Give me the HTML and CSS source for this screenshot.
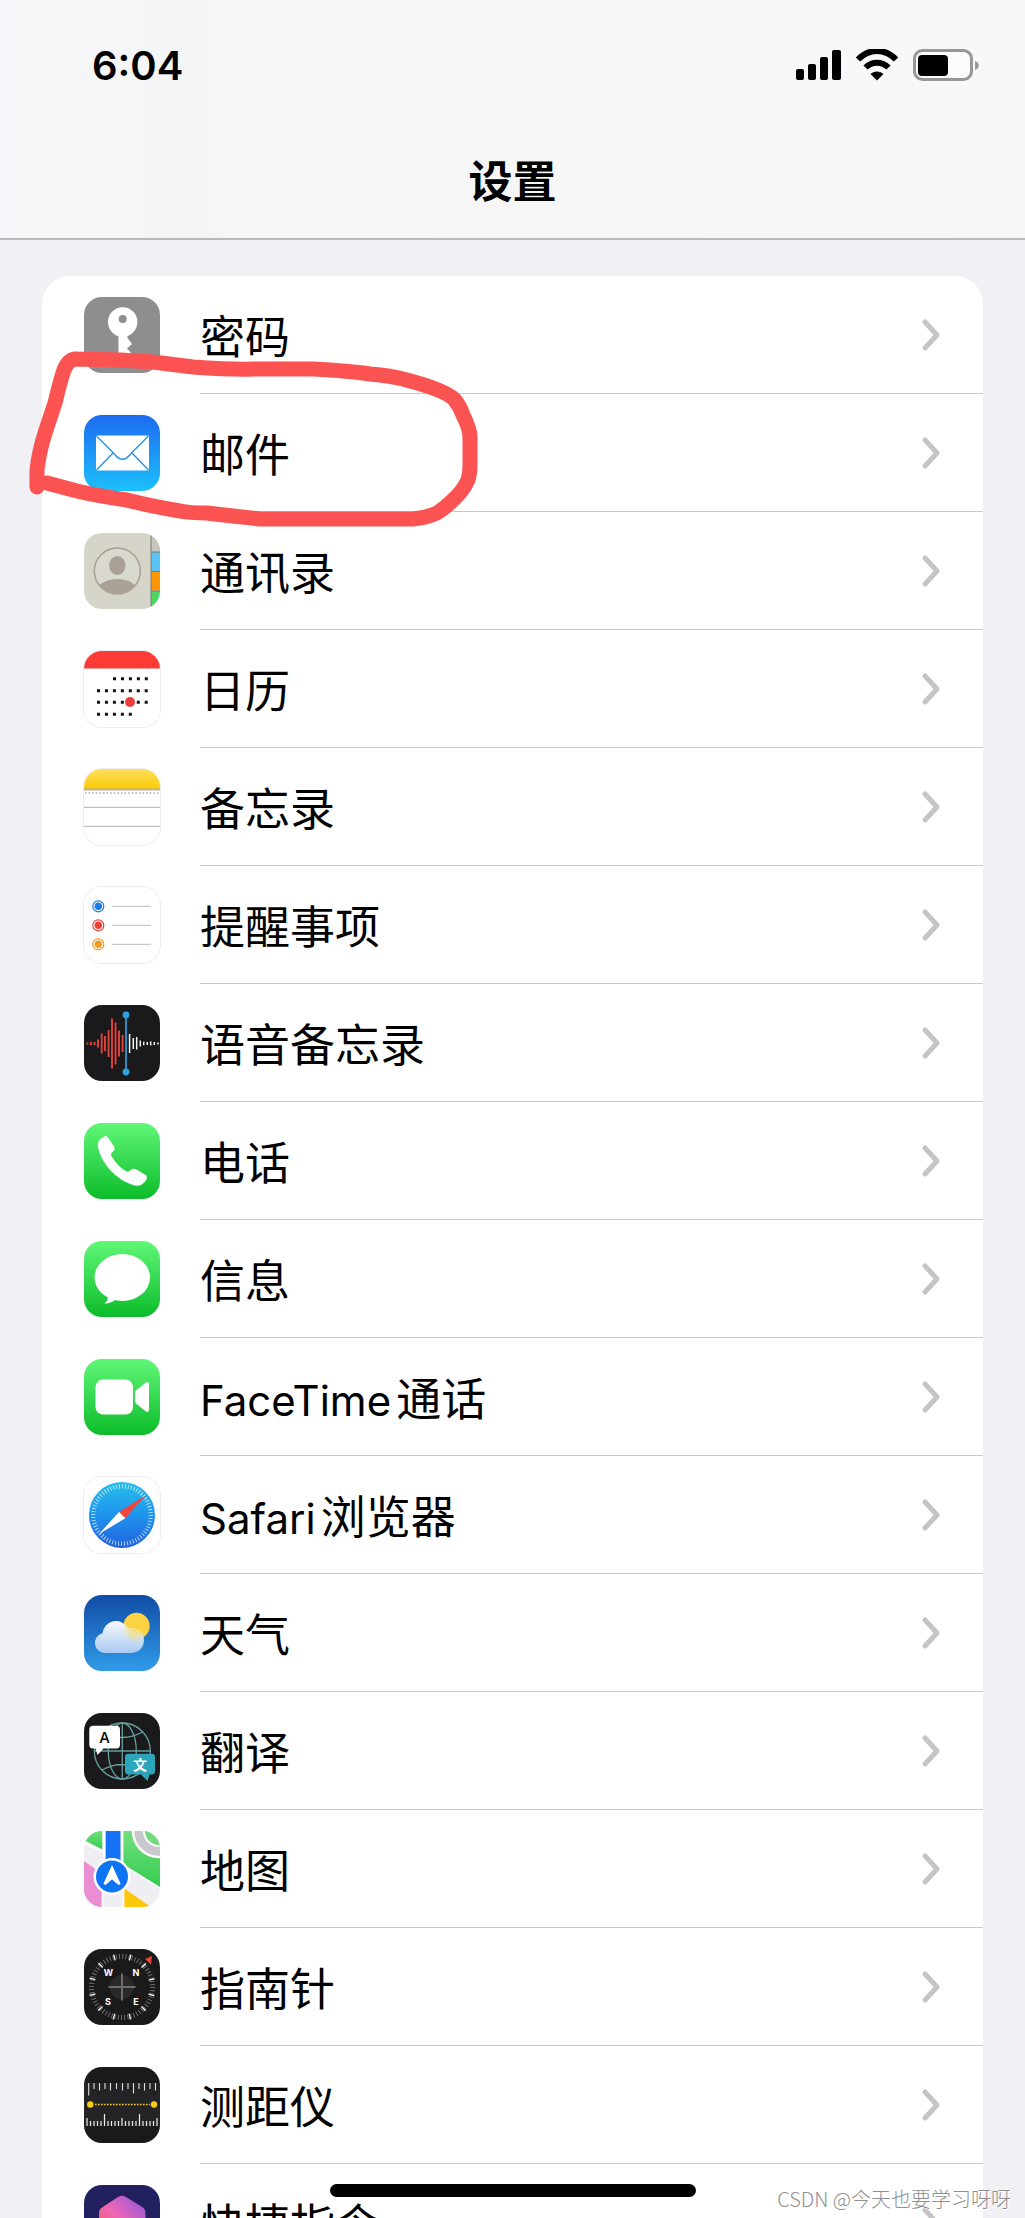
FILE: index.html
```html
<!DOCTYPE html>
<html lang="zh-CN">
<head>
  <meta charset="UTF-8">
  <meta name="viewport" content="width=device-width, initial-scale=1">
  <title>设置</title>
  <link rel="stylesheet" href="styles.css">
</head>
<body>
  <!-- Shared gradients and shapes -->
  <svg class="defs" width="0" height="0" aria-hidden="true">
    <defs>
      <linearGradient id="g-mail" x1="0" y1="0" x2="0" y2="1"><stop offset="0" stop-color="#1d6bf0"/><stop offset="1" stop-color="#1cc0fb"/></linearGradient>
      <linearGradient id="g-green" x1="0" y1="0" x2="0" y2="1"><stop offset="0" stop-color="#60f777"/><stop offset="1" stop-color="#0cbc2a"/></linearGradient>
      <linearGradient id="g-notes" x1="0" y1="0" x2="0" y2="1"><stop offset="0" stop-color="#fddf5c"/><stop offset="1" stop-color="#fcca05"/></linearGradient>
      <linearGradient id="g-safari" x1="0" y1="0" x2="0" y2="1"><stop offset="0" stop-color="#27bfe8"/><stop offset="0.5" stop-color="#1e94ee"/><stop offset="1" stop-color="#2261dc"/></linearGradient>
      <linearGradient id="g-sky" x1="0" y1="0" x2="0" y2="1"><stop offset="0" stop-color="#114ca6"/><stop offset="1" stop-color="#309be8"/></linearGradient>
      <linearGradient id="g-cloud" x1="0" y1="0" x2="0" y2="1"><stop offset="0" stop-color="#f8fafd"/><stop offset="1" stop-color="#a9caf1"/></linearGradient>
      <radialGradient id="g-glow" gradientUnits="userSpaceOnUse" cx="51" cy="35" r="13"><stop offset="0" stop-color="#fbdc70"/><stop offset="1" stop-color="#fbdc70" stop-opacity="0"/></radialGradient>
      <linearGradient id="g-land" x1="0" y1="0" x2="0" y2="1"><stop offset="0" stop-color="#70e07c"/><stop offset="1" stop-color="#35cb50"/></linearGradient>
      <linearGradient id="g-hex" x1="0" y1="1" x2="1" y2="0"><stop offset="0" stop-color="#f4584a"/><stop offset="0.5" stop-color="#ee67b5"/><stop offset="1" stop-color="#8c55dd"/></linearGradient>
      <symbol id="chevron" viewBox="0 0 20 34"><path d="M4 4L16 17L4 30" fill="none" stroke="#c4c4c6" stroke-width="5" stroke-linecap="round" stroke-linejoin="round"/></symbol>
    </defs>
  </svg>

  <div class="screen">
    <header class="header">
      <div class="status-bar">
        <span class="clock">6:04</span>
        <div class="status-icons">
          <svg width="45" height="32" viewBox="0 0 45 32">
            <rect x="0" y="20" width="8" height="11" rx="2"/>
            <rect x="12" y="15" width="8" height="16" rx="2"/>
            <rect x="24" y="8" width="8" height="23" rx="2"/>
            <rect x="36" y="1" width="9" height="30" rx="2"/>
          </svg>
          <svg width="44" height="32" viewBox="0 0 44 32">
            <path d="M3 10.5C14-1 30-1 41 10.5" fill="none" stroke="#000" stroke-width="6"/>
            <path d="M10.500 18.500C17 12 27 12 33.500 18.500" fill="none" stroke="#000" stroke-width="6"/>
            <path d="M22 31.500L15.500 25C19 21.500 25 21.500 28.500 25Z"/>
          </svg>
          <svg width="66" height="32" viewBox="0 0 66 32">
            <rect x="1.500" y="1.500" width="57" height="29" rx="8" fill="#fbfbfb" stroke="#979797" stroke-width="3"/>
            <rect x="5" y="6" width="30" height="21" rx="4"/>
            <path d="M62 12C67 13 67 20 62 21Z" fill="#979797"/>
          </svg>
        </div>
      </div>
      <h1 class="title">设置</h1>
    </header>

    <main class="content">
      <nav class="settings-list" aria-label="设置">
        <a class="row" href="#passwords">
          <svg class="app-icon" viewBox="0 0 76 76">
            <rect width="76" height="76" fill="#8e8e8e"/>
            <path d="M34.500 36H43.500V41L48 47L43 51.500L48 57L42 64L38 67L34.500 63Z" fill="#fff"/>
            <circle cx="38.700" cy="25" r="14.700" fill="#fff"/>
            <circle cx="38.700" cy="22" r="4" fill="#8e8e8e"/>
          </svg>
          <span class="label"><span>密码</span><svg class="chevron"><use href="#chevron"/></svg></span>
        </a>

        <a class="row" href="#mail">
          <svg class="app-icon" viewBox="0 0 76 76">
            <rect width="76" height="76" fill="url(#g-mail)"/>
            <rect x="12" y="20.500" width="53" height="35" rx="1" fill="#fff"/>
            <path d="M12.500 21L30 38.500Q38.500 50 47 38.500L64.500 21M12.500 55L29 38M64.500 55L48 38" fill="none" stroke="#2391e8" stroke-width="1.300"/>
          </svg>
          <span class="label"><span>邮件</span><svg class="chevron"><use href="#chevron"/></svg></span>
        </a>

        <a class="row" href="#contacts">
          <svg class="app-icon" viewBox="0 0 76 76">
            <rect width="76" height="76" fill="#d5d5ca"/>
            <rect x="67" width="9" height="19" fill="#c7c7bd"/>
            <rect x="67" y="19" width="9" height="19" fill="#5bc2f6"/>
            <rect x="67" y="38.500" width="9" height="19" fill="#ff9500"/>
            <rect x="67" y="58" width="9" height="18" fill="#4cd662"/>
            <path d="M67 0V76M67 19H76M67 38.500H76M67 58H76" stroke="#7d7d77" stroke-width="1"/>
            <clipPath id="face"><circle cx="33.300" cy="38" r="22.500"/></clipPath>
            <circle cx="33.300" cy="38" r="23" fill="#dad9cf" stroke="#a89f94" stroke-width="1.500"/>
            <ellipse cx="33.300" cy="32.500" rx="8.200" ry="9.500" fill="#a9a198"/>
            <ellipse cx="33.300" cy="58" rx="20" ry="12" fill="#a9a198" clip-path="url(#face)"/>
          </svg>
          <span class="label"><span>通讯录</span><svg class="chevron"><use href="#chevron"/></svg></span>
        </a>

        <a class="row" href="#calendar">
          <svg class="app-icon outlined" viewBox="0 0 76 76">
            <rect width="76" height="76" fill="#fff"/>
            <rect width="76" height="17.500" fill="#fc3b34"/>
            <g stroke="#111" stroke-width="3" stroke-dasharray="3 4.950">
              <path d="M29 27.700H64"/>
              <path d="M13 39.700H64"/>
              <path d="M13 51.300H64"/>
              <path d="M13 63.300H48"/>
            </g>
            <circle cx="46" cy="51" r="5" fill="#ee3b3b"/>
          </svg>
          <span class="label"><span>日历</span><svg class="chevron"><use href="#chevron"/></svg></span>
        </a>

        <a class="row" href="#notes">
          <svg class="app-icon outlined" viewBox="0 0 76 76">
            <rect width="76" height="76" fill="#fff"/>
            <rect width="76" height="20" fill="url(#g-notes)"/>
            <path d="M0 20.500H76" stroke="#b5b1a3" stroke-width="2"/>
            <path d="M1 24H76" stroke="#aaa" stroke-width="1.500" stroke-dasharray="1.500 2.100"/>
            <path d="M0 38.300H76M0 57.300H76" stroke="#b0b0b0"/>
          </svg>
          <span class="label"><span>备忘录</span><svg class="chevron"><use href="#chevron"/></svg></span>
        </a>

        <a class="row" href="#reminders">
          <svg class="app-icon outlined" viewBox="0 0 76 76">
            <rect width="76" height="76" fill="#fff"/>
            <circle cx="14.300" cy="19.300" r="5.500" fill="none" stroke="#1a7be5" stroke-width="1.200"/><circle cx="14.300" cy="19.300" r="3.700" fill="#1a7be5"/>
            <circle cx="14.300" cy="38.300" r="5.500" fill="none" stroke="#ef4138" stroke-width="1.200"/><circle cx="14.300" cy="38.300" r="3.700" fill="#ef4138"/>
            <circle cx="14.300" cy="57.300" r="5.500" fill="none" stroke="#f39b1d" stroke-width="1.200"/><circle cx="14.300" cy="57.300" r="3.700" fill="#f39b1d"/>
            <path d="M28 19.300H67M28 38.300H67M28 57.300H67" stroke="#bcbcbc"/>
          </svg>
          <span class="label"><span>提醒事项</span><svg class="chevron"><use href="#chevron"/></svg></span>
        </a>

        <a class="row" href="#voice-memos">
          <svg class="app-icon" viewBox="0 0 76 76">
            <rect width="76" height="76" fill="#1a1a1c"/>
            <path d="M3.500 37.500v2M7 36.700v3.500M10.500 37v3M14 34.500v8M17.700 28.500v20M21 31v15M24.600 25v27M28 13.500v50M31.600 17.500v42M35 25.500v26M38.600 30v17" stroke="#e0433c" stroke-width="1.900"/>
            <path d="M45.600 29v19M49.300 33v11M52.700 32v12.500M56.300 35.500v6M59.700 36.800v3.500M63.300 37v3M66.700 36.500v4M70.300 37v3M74 37.500v2" stroke="#f4f4f4" stroke-width="1.500"/>
            <path d="M42 10V67" stroke="#2aa3e0" stroke-width="1.700"/>
            <circle cx="42" cy="10" r="3.400" fill="#2aa3e0"/><circle cx="42" cy="67" r="3.400" fill="#2aa3e0"/>
          </svg>
          <span class="label"><span>语音备忘录</span><svg class="chevron"><use href="#chevron"/></svg></span>
        </a>

        <a class="row" href="#phone">
          <svg class="app-icon" viewBox="0 0 76 76">
            <rect width="76" height="76" fill="url(#g-green)"/>
            <path d="M17 15.500C19 13.500 22 12 24 14.500L30 23.500C31.500 26 30.500 27.500 28.500 29C26.500 30.500 26.500 32 28 34C32 40 36 44.500 41 47.500C43 49 44.500 49 46 47.500C48 45.500 50 45 52.500 46.500L61 51.500C64 53.500 63 56 61 58.500C58 62.500 54 63.500 49 62C32 56.500 18.500 41 14.500 26.500C13 21 14 18 17 15.500Z" fill="#fff"/>
          </svg>
          <span class="label"><span>电话</span><svg class="chevron"><use href="#chevron"/></svg></span>
        </a>

        <a class="row" href="#messages">
          <svg class="app-icon" viewBox="0 0 76 76">
            <rect width="76" height="76" fill="url(#g-green)"/>
            <ellipse cx="38.300" cy="36.500" rx="27.700" ry="23.500" fill="#fff"/>
            <path d="M23 54C25 58 22.500 61 20.500 62.500C26.500 62.500 30 60 33 57.500Z" fill="#fff"/>
          </svg>
          <span class="label"><span>信息</span><svg class="chevron"><use href="#chevron"/></svg></span>
        </a>

        <a class="row" href="#facetime">
          <svg class="app-icon" viewBox="0 0 76 76">
            <rect width="76" height="76" fill="url(#g-green)"/>
            <rect x="11.500" y="20.500" width="37.500" height="35" rx="7.500" fill="#fff"/>
            <path d="M51 34Q51 32 52.500 31L62 23.500Q65 22 65 25V50.500Q65 54 62 52.500L52.500 45Q51 44 51 42Z" fill="#fff"/>
          </svg>
          <span class="label"><span><span class="latin">FaceTime</span>通话</span><svg class="chevron"><use href="#chevron"/></svg></span>
        </a>

        <a class="row" href="#safari">
          <svg class="app-icon outlined" viewBox="0 0 76 76">
            <rect width="76" height="76" fill="#fff"/>
            <circle cx="38" cy="38" r="33" fill="url(#g-safari)"/>
            <circle cx="38" cy="38" r="28.500" fill="none" stroke="#d8f0fb" stroke-width="4" stroke-dasharray="0.900 2.080" opacity="0.800"/>
            <circle cx="38" cy="38" r="30" fill="none" stroke="#d8f0fb" stroke-width="2" stroke-dasharray="0.900 2.240" opacity="0.500"/>
            <path d="M61.500 18.500L35 35L41.300 41.300Z" fill="#f0453c"/>
            <path d="M15 57L35 35L41.300 41.300Z" fill="#fff"/>
          </svg>
          <span class="label"><span><span class="latin">Safari</span>浏览器</span><svg class="chevron"><use href="#chevron"/></svg></span>
        </a>

        <a class="row" href="#weather">
          <svg class="app-icon" viewBox="0 0 76 76">
            <rect width="76" height="76" fill="url(#g-sky)"/>
            <circle cx="52.500" cy="31" r="13.200" fill="#fbd242"/>
            <path d="M21 58A10 10 0 0 1 18.500 38.300A13.500 13.500 0 0 1 44 33.500A12.500 12.500 0 1 1 47.500 58Z" fill="url(#g-cloud)"/>
            <path d="M21 58A10 10 0 0 1 18.500 38.300A13.500 13.500 0 0 1 44 33.500A12.500 12.500 0 1 1 47.500 58Z" fill="url(#g-glow)"/>
          </svg>
          <span class="label"><span>天气</span><svg class="chevron"><use href="#chevron"/></svg></span>
        </a>

        <a class="row" href="#translate">
          <svg class="app-icon" viewBox="0 0 76 76">
            <rect width="76" height="76" fill="#1a1a1c"/>
            <g fill="none" stroke="#67a09f" stroke-width="1.300">
              <circle cx="38.300" cy="38" r="28"/>
              <ellipse cx="38.300" cy="38" rx="14" ry="28"/>
              <path d="M38.300 10V66M10 38H66.500M18 19Q38 30 58.500 19M18 57Q38 46 58.500 57"/>
            </g>
            <path d="M9 12.700H32.500Q36 12.700 36 16.500V31.500Q36 35.500 32.500 35.500H19.500L13.500 42L11.500 35.500H9Q5.300 35.500 5.300 31.500V16.500Q5.300 12.700 9 12.700Z" fill="#fff"/>
            <path d="M44.500 40.700H67.500Q71 40.700 71 44V58Q71 61.500 67.500 61.500H65.500L63.500 68L57 61.500H44.500Q41 61.500 41 58V44Q41 40.700 44.500 40.700Z" fill="#2ba5ba"/>
            <text class="glyph-a" x="20.500" y="29.500">A</text>
            <text class="glyph-wen" x="56" y="56.500">文</text>
          </svg>
          <span class="label"><span>翻译</span><svg class="chevron"><use href="#chevron"/></svg></span>
        </a>

        <a class="row" href="#maps">
          <svg class="app-icon" viewBox="0 0 76 76">
            <rect width="76" height="76" fill="#efeff3"/>
            <path d="M0 0H18.500V18.500L0 9Z" fill="url(#g-land)"/>
            <path d="M0 11L18.500 19V0H20V22L0 13Z" fill="#fff"/>
            <path d="M39.500 0H76V57L39.500 33.500Z" fill="url(#g-land)"/>
            <circle cx="75" cy="0" r="26" fill="#c9c9cd" stroke="#fff" stroke-width="2.500"/>
            <circle cx="75" cy="0" r="15" fill="#72dc7d" stroke="#fff" stroke-width="2"/>
            <path d="M0 30L18.500 43V76H0Z" fill="#eb8dd2"/>
            <path d="M39.500 57L67 76H39.500Z" fill="#fdc70b"/>
            <rect x="21.500" width="15" height="45" fill="#1673f5"/>
            <path d="M20.500 0V30M37.800 0V30M38.800 34L76 57M18.500 43V76M39.500 57V76" stroke="#fff" stroke-width="1.700"/>
            <circle cx="28" cy="45.500" r="18.500" fill="#fff"/>
            <circle cx="28" cy="45.500" r="16" fill="#0d74f4"/>
            <path d="M28 34L36.500 52.500Q36 54.500 34 53.500L28 48.500L22 53.500Q20 54.500 19.500 52.500Z" fill="#fff"/>
          </svg>
          <span class="label"><span>地图</span><svg class="chevron"><use href="#chevron"/></svg></span>
        </a>

        <a class="row" href="#compass">
          <svg class="app-icon" viewBox="0 0 76 76">
            <rect width="76" height="76" fill="#1a1a1b"/>
            <circle cx="38" cy="38" r="30.500" fill="none" stroke="#77777a" stroke-width="5" stroke-dasharray="0.900 2.294"/>
            <circle cx="38" cy="38" r="30.500" fill="none" stroke="#f5f5f5" stroke-width="6" stroke-dasharray="1.300 14.670" stroke-dashoffset="-7.400"/>
            <circle cx="38" cy="38" r="12" fill="#29292a"/>
            <path d="M38 24.500V51.500M24.500 38H51.500" stroke="#6c6c6e" stroke-width="2"/>
            <path d="M61 10L68 7L67 15.500Z" fill="#f1423a"/>
            <g class="compass-points">
              <text x="24.300" y="27.300">W</text>
              <text x="52" y="27.300">N</text>
              <text x="24" y="56">S</text>
              <text x="52" y="56">E</text>
            </g>
          </svg>
          <span class="label"><span>指南针</span><svg class="chevron"><use href="#chevron"/></svg></span>
        </a>

        <a class="row" href="#measure">
          <svg class="app-icon" viewBox="0 0 76 76">
            <rect width="76" height="76" fill="#1a1a1b"/>
            <rect y="16" width="76" height="43" fill="#242427"/>
            <path d="M4.700 16v12.500M10 16v6M15.500 16v7.500M21 16v6M26.500 16v7.500M32.500 16v6M38.500 16v7.500M44 16v6M49.500 16v10.500M55 16v6M60.500 16v7.500M66 16v6M71.500 16v7.500" stroke="#dedede" stroke-width="1.100"/>
            <path d="M3 59v-8M6.500 59v-5M10 59v-5M13.500 59v-5M17 59v-5M20.500 59v-12M24 59v-5M27.500 59v-5M31 59v-5M34.500 59v-5M38 59v-8M41.500 59v-5M45 59v-5M48.500 59v-5M52 59v-5M55.500 59v-12M59 59v-5M62.500 59v-5M66 59v-5M69.500 59v-5M73 59v-8" stroke="#efefef" stroke-width="1.200"/>
            <path d="M11 37.500H66" stroke="#eec21c" stroke-width="1.300" stroke-dasharray="1.700 1.300"/>
            <circle cx="6.300" cy="37.500" r="3.200" fill="#f8ce15"/><circle cx="70" cy="37.500" r="3.200" fill="#f8ce15"/>
          </svg>
          <span class="label"><span>测距仪</span><svg class="chevron"><use href="#chevron"/></svg></span>
        </a>

        <a class="row" href="#shortcuts">
          <svg class="app-icon" viewBox="0 0 76 76">
            <rect width="76" height="76" fill="#22205e"/>
            <path d="M34 12Q38 9.500 42 12L59 22.500Q61.500 24.500 61.500 28V50L38 64L15 50V28Q15 24.500 18 22.500Z" fill="url(#g-hex)"/>
          </svg>
          <span class="label"><span>快捷指令</span><svg class="chevron"><use href="#chevron"/></svg></span>
        </a>
      </nav>
    </main>

    <!-- Hand-drawn marker around the mail row -->
    <svg class="marker" width="460" height="190" viewBox="25 345 460 190" aria-hidden="true">
      <path d="M37 487L37 470Q39 452 45 433L55 403Q60 382 63 373Q67 360 75 359L120 360L153 362L193 367Q235 370 253 369H313Q350 371 370 374Q392 376 403 379Q422 384 433 388Q449 394 454 399Q460 406 463 415Q470 429 470 437V463Q470 474 468 480Q463 491 453 500Q445 508 437 513Q426 518 413 519H260Q232 516 207 513Q190 513 180 511Q150 506 127 500Q98 496 77 491L47 483"/>
    </svg>
    <div class="home-indicator"></div>
    <span class="watermark">CSDN @今天也要学习呀呀</span>
  </div>
</body>
</html>
```
FILE: styles.css
```css
* {
  margin: 0;
  padding: 0;
  box-sizing: border-box;
}

body {
  background: #f0f0f5;
  color: #000;
  font-family: Inter, 'Noto Sans CJK SC', sans-serif;
}

.defs {
  position: absolute;
}

.screen {
  position: relative;
  display: flex;
  flex-direction: column;
  height: 100vh;
  overflow: hidden;
}

/* Header */
.header {
  flex: none;
  background: linear-gradient(to right, #f4f7f9, #f4f5f7 16%, #f6f6f7 40%, #f8f8fa);
  border-bottom: 2px solid #b9b9bc;
}

.status-bar {
  display: flex;
  align-items: center;
  justify-content: space-between;
  height: 130px;
  padding: 0 46px 0 92px;
}

.clock {
  font-size: 40px;
  font-weight: 600;
}

.status-icons {
  display: flex;
  align-items: center;
  gap: 14px;
}

.title {
  padding-bottom: 4px;
  font-size: 44px;
  font-weight: 700;
  line-height: 104px;
  text-align: center;
}

/* Settings list */
.content {
  flex: 1;
  padding: 36px 42px 0;
  overflow-y: auto;
  scrollbar-width: none;
}

.settings-list {
  background: #fff;
  border-radius: 28px 28px 0 0;
}

.row {
  display: flex;
  align-items: center;
  gap: 40px;
  height: 118px;
  padding-left: 42px;
  color: inherit;
  text-decoration: none;
}

.app-icon {
  flex: none;
  width: 76px;
  height: 76px;
  border-radius: 18px;
}

.outlined {
  box-shadow: 0 0 0 1px #ececec;
}

.label {
  display: flex;
  flex: 1;
  align-items: center;
  justify-content: space-between;
  height: 100%;
  padding-right: 42px;
  border-bottom: 1px solid #c8c8ca;
  font-size: 45px;
}

.latin {
  margin-right: 5px;
  font-size: 42px;
}

.chevron {
  width: 20px;
  height: 34px;
}

/* Lettering inside icons */
.glyph-a {
  font-size: 15px;
  font-weight: 500;
  text-anchor: middle;
}

.glyph-wen {
  fill: #fff;
  font-size: 14px;
  font-weight: 700;
  text-anchor: middle;
}

.compass-points {
  fill: #fff;
  font-size: 9px;
  font-weight: 700;
  text-anchor: middle;
}

/* Overlays */
.marker {
  position: absolute;
  top: 345px;
  left: 25px;
  pointer-events: none;
}

.marker path {
  fill: none;
  stroke: #fb5252;
  stroke-width: 15px;
  stroke-linecap: round;
  stroke-linejoin: round;
}

.home-indicator {
  position: absolute;
  bottom: 21px;
  left: 50%;
  width: 366px;
  height: 13px;
  background: #000;
  border-radius: 7px;
  transform: translateX(-50%);
}

.watermark {
  position: absolute;
  right: 14px;
  bottom: 5px;
  color: #8f8f93;
  font-family: 'Noto Sans CJK SC', sans-serif;
  font-size: 20px;
  font-weight: 300;
  text-shadow: 1px 1px 0 #fff;
}
```
